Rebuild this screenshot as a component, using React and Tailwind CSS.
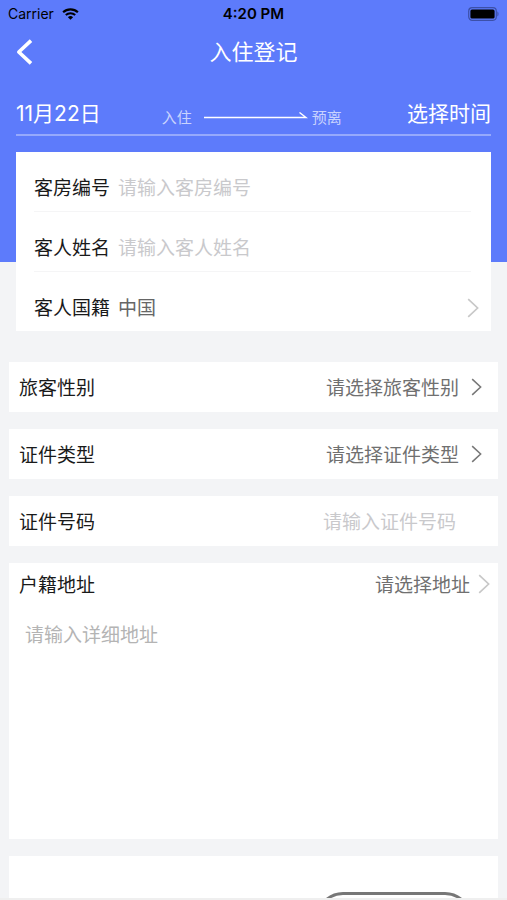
import React from 'react';

function Chevron({ className }) {
  return (
    <svg viewBox="0 0 12 20" fill="none" stroke="currentColor" strokeWidth="1.7" aria-hidden="true" className={`shrink-0 ${className}`}>
      <path d="M1.2 1.2 10.6 10 1.2 18.8" />
    </svg>
  );
}

function StatusBar() {
  return (
    <div className="grid h-7 grid-cols-3 items-center px-2 text-black">
      <div className="flex items-center gap-2 text-sm">
        Carrier
        <svg viewBox="0 0 18 13" className="h-3 w-[17px]" fill="none" stroke="currentColor" aria-hidden="true">
          <path d="M1 4.6C5.4.4 12.6.4 17 4.6" strokeWidth="2.3" />
          <path d="M3.9 7.6c2.9-2.7 7.3-2.7 10.2 0" strokeWidth="2.2" />
          <path d="M6.2 9.9c1.6-1.5 4-1.5 5.6 0L9 12.800z" fill="currentColor" stroke="none" />
        </svg>
      </div>
      <div className="text-center text-[15px] font-semibold whitespace-nowrap">4:20 PM</div>
      <svg viewBox="0 0 32 14" className="h-[14px] w-8 justify-self-end" aria-hidden="true">
        <rect x="1.7" y="0.7" width="27.6" height="12.6" rx="3.5" fill="none" stroke="#3c50a8" strokeWidth="1.2" />
        <rect x="3.4" y="2.4" width="24.2" height="9.2" rx="1.6" fill="#000" />
        <path d="M30.4 4.600c1.500.6 1.500 4.200 0 4.800z" fill="#3c50a8" />
      </svg>
    </div>
  );
}

function Header() {
  return (
    <header className="bg-[#5d7bfb] pb-[126px] text-white">
      <StatusBar />
      <div className="grid h-12 grid-cols-[1fr_auto_1fr] items-center px-4">
        <button type="button" aria-label="返回" className="w-6">
          <svg viewBox="0 0 18 28" className="h-7 w-[18px]" fill="none" stroke="currentColor" strokeWidth="3.6" aria-hidden="true">
            <path d="M15 2.600 2.800 14 15 25.400" strokeLinejoin="round" />
          </svg>
        </button>
        <h1 className="text-[22px]">入住登记</h1>
      </div>
      <div className="mx-4 flex h-[60px] items-end justify-between border-b-2 border-[#96a9fc] pb-1">
        <button type="button" className="text-[21px] leading-8">11月22日</button>
        <div className="mr-1 flex items-center gap-3 text-[15px] leading-6 text-[#c9d3fe]">
          <span>入住</span>
          <div className="flex items-center gap-1">
            <svg viewBox="0 0 104 12" className="h-3 w-[104px] text-white" fill="none" stroke="currentColor" strokeWidth="1.4" aria-hidden="true">
              <path d="M0 5.500h102L95.500.5" />
            </svg>
            <span>预离</span>
          </div>
        </div>
        <button type="button" className="text-[21px] leading-8">选择时间</button>
      </div>
    </header>
  );
}

const labelClass = 'shrink-0 text-[19px] text-[#1a1a1a]';

function GuestInput({ id, label }) {
  return (
    <div className="mr-2 flex h-[60px] items-center gap-2 border-b border-[#f5f5f6] pt-3">
      <label htmlFor={id} className={labelClass}>{label}</label>
      <input id={id} placeholder={`请输入${label}`} className="min-w-0 flex-1 text-[19px] text-[#666] outline-none placeholder:text-[#c9c9cc]" />
    </div>
  );
}

function Picker({ id, label }) {
  return (
    <div className="flex h-[50px] shrink-0 items-center bg-white pr-4 pl-[10px]">
      <label htmlFor={id} className={labelClass}>{label}</label>
      <select id={id} className="mr-3 min-w-0 flex-1 appearance-none bg-transparent text-[19px] text-[#707070] outline-none [text-align-last:right]">
        <option>请选择{label}</option>
      </select>
      <Chevron className="h-[18px] w-[11px] text-[#777]" />
    </div>
  );
}

export default function App() {
  return (
    <div className="flex h-screen flex-col overflow-hidden border-b-2 border-[#efefef] bg-[#f3f4f6] font-[Inter,'Noto_Sans_CJK_SC',sans-serif]">
      <Header />
      <form className="-mt-[110px] flex min-h-0 flex-1 flex-col font-['Noto_Sans_CJK_SC',sans-serif]">
        <section className="mx-4 shrink-0 bg-white pr-3 pl-[18px]">
          <GuestInput id="room" label="客房编号" />
          <GuestInput id="name" label="客人姓名" />
          <div className="flex h-[59px] items-center gap-2 pt-3">
            <label htmlFor="country" className={labelClass}>客人国籍</label>
            <select id="country" className="min-w-0 flex-1 appearance-none bg-transparent text-[19px] text-[#666] outline-none">
              <option>中国</option>
            </select>
            <Chevron className="h-5 w-3 text-[#c8c8c8]" />
          </div>
        </section>
        <div className="mx-[9px] mt-[31px] flex min-h-0 flex-1 flex-col gap-[17px]">
          <Picker id="gender" label="旅客性别" />
          <Picker id="idtype" label="证件类型" />
          <div className="flex h-[50px] shrink-0 items-center bg-white pr-[42px] pl-[10px]">
            <label htmlFor="idno" className={labelClass}>证件号码</label>
            <input id="idno" placeholder="请输入证件号码" className="min-w-0 flex-1 text-right text-[19px] text-[#666] outline-none placeholder:text-[#c9c9cc]" />
          </div>
          <section className="flex h-[276px] shrink-0 flex-col bg-white">
            <div className="flex h-[42px] items-center pr-2 pl-[10px]">
              <label htmlFor="region" className={labelClass}>户籍地址</label>
              <select id="region" className="mr-2 min-w-0 flex-1 appearance-none bg-transparent text-[19px] text-[#707070] outline-none [text-align-last:right]">
                <option>请选择地址</option>
              </select>
              <Chevron className="h-5 w-3 text-[#c8c8c8]" />
            </div>
            <textarea aria-label="详细地址" placeholder="请输入详细地址" className="w-full flex-1 resize-none px-4 pt-[15px] text-[19px] text-[#666] outline-none placeholder:text-[#b4b4b4]" />
          </section>
          <section className="flex min-h-0 flex-1 items-start justify-end overflow-hidden bg-white pt-9 pr-[26px]">
            <button type="button" aria-label="拍照" className="h-[54px] w-[156px] shrink-0 rounded-full border-3 border-[#777]" />
          </section>
        </div>
      </form>
    </div>
  );
}
